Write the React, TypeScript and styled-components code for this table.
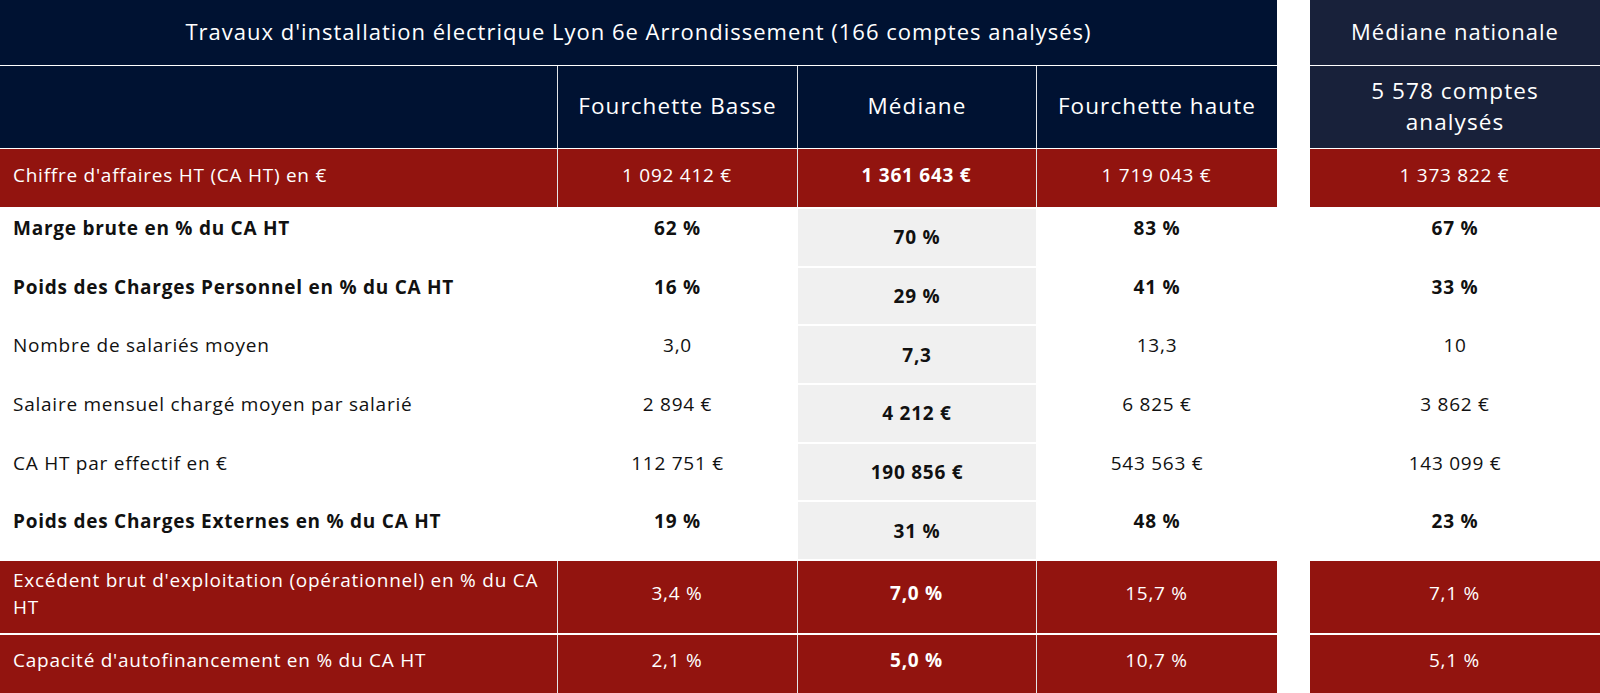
import React from "react";
import styled, { createGlobalStyle } from "styled-components";

const GlobalStyle = createGlobalStyle`
  html, body { margin: 0; padding: 0; background: #ffffff; }
  body { font-family: "Open Sans", "Noto Sans", sans-serif; overflow: hidden; }
`;

const NAVY = "#001232";
const NAVY_NAT = "#18213a";
const RED = "#92140f";
const GRAY = "#f0f0f0";
const LINE = "#e4e5e8";

const Page = styled.div`
  display: flex;
  gap: 33px;
  width: 1600px;
`;

const Table = styled.div<{ $width: string }>`
  display: flex;
  flex-direction: column;
  width: ${(p) => p.$width};
  flex: ${(p) => (p.$width === "auto" ? "1" : "none")};
`;

const Row = styled.div<{ $cols: string; $h: number; $gap: number; $line: boolean }>`
  display: grid;
  grid-template-columns: ${(p) => p.$cols};
  column-gap: 1px;
  height: ${(p) => p.$h}px;
  margin-top: ${(p) => p.$gap}px;
  background: ${(p) => (p.$line ? LINE : "#ffffff")};
`;

const TitleCell = styled.div<{ $bg: string }>`
  background: ${(p) => p.$bg};
  color: #ffffff;
  display: flex;
  align-items: center;
  justify-content: center;
  text-align: center;
  font-size: 22px;
  letter-spacing: 1px;
  padding-bottom: 4px;
  box-sizing: border-box;
`;

const HeadCell = styled.div<{ $bg: string }>`
  background: ${(p) => p.$bg};
  color: #ffffff;
  display: flex;
  align-items: center;
  justify-content: center;
  text-align: center;
  font-size: 22.5px;
  letter-spacing: 1.1px;
  line-height: 31px;
  padding-bottom: 3px;
  box-sizing: border-box;
`;

const RedCell = styled.div<{ $label?: boolean; $bold?: boolean }>`
  background: ${RED};
  color: #ffffff;
  display: flex;
  align-items: center;
  justify-content: ${(p) => (p.$label ? "flex-start" : "center")};
  text-align: ${(p) => (p.$label ? "left" : "center")};
  padding: 0 14px 6px 13px;
  box-sizing: border-box;
  font-size: 19px;
  letter-spacing: 0.75px;
  line-height: 27px;
  font-weight: ${(p) => (p.$bold ? 700 : 400)};
`;

const BodyCell = styled.div<{ $label?: boolean; $bold?: boolean; $median?: boolean }>`
  background: ${(p) => (p.$median ? GRAY : "#ffffff")};
  color: #111111;
  display: flex;
  align-items: ${(p) => (p.$median ? "center" : "flex-start")};
  justify-content: ${(p) => (p.$label ? "flex-start" : "center")};
  padding: ${(p) => (p.$median ? "0" : "6px 0 0")};
  padding-left: ${(p) => (p.$label ? "13px" : "0")};
  box-sizing: border-box;
  font-size: 19px;
  letter-spacing: 0.75px;
  line-height: 26px;
  font-weight: ${(p) => (p.$bold ? 700 : 400)};
`;

const LEFT_COLS = "557px 239px 238px 240px";
const RIGHT_COLS = "1fr";

const nb = (s: string) => s.replace(/ /g, "\u00A0");

type BodyRow = { label: string; bold: boolean; vals: string[]; nat: string };
type RedRow = { label: string; vals: string[]; nat: string; h: number; gap: number };

const redTop: RedRow[] = [
  {
    label: "Chiffre d'affaires HT (CA HT) en €",
    vals: ["1 092 412 €", "1 361 643 €", "1 719 043 €"],
    nat: "1 373 822 €",
    h: 58,
    gap: 1,
  },
];

const bodyRows: BodyRow[] = [
  { label: "Marge brute en % du CA HT", bold: true, vals: ["62 %", "70 %", "83 %"], nat: "67 %" },
  { label: "Poids des Charges Personnel en % du CA HT", bold: true, vals: ["16 %", "29 %", "41 %"], nat: "33 %" },
  { label: "Nombre de salariés moyen", bold: false, vals: ["3,0", "7,3", "13,3"], nat: "10" },
  { label: "Salaire mensuel chargé moyen par salarié", bold: false, vals: ["2 894 €", "4 212 €", "6 825 €"], nat: "3 862 €" },
  { label: "CA HT par effectif en €", bold: false, vals: ["112 751 €", "190 856 €", "543 563 €"], nat: "143 099 €" },
  { label: "Poids des Charges Externes en % du CA HT", bold: true, vals: ["19 %", "31 %", "48 %"], nat: "23 %" },
];

const redBottom: RedRow[] = [
  {
    label: "Excédent brut d'exploitation (opérationnel) en % du CA HT",
    vals: ["3,4 %", "7,0 %", "15,7 %"],
    nat: "7,1 %",
    h: 72,
    gap: 2,
  },
  {
    label: "Capacité d'autofinancement en % du CA HT",
    vals: ["2,1 %", "5,0 %", "10,7 %"],
    nat: "5,1 %",
    h: 58,
    gap: 2,
  },
];

const BODY_H = 56.67;

export default function App() {
  return (
    <>
      <GlobalStyle />
      <Page>
        <Table $width="1277px">
          <Row $cols="1fr" $h={65} $gap={0} $line>
            <TitleCell $bg={NAVY}>
              Travaux d'installation électrique Lyon 6e Arrondissement (166 comptes analysés)
            </TitleCell>
          </Row>
          <Row $cols={LEFT_COLS} $h={82} $gap={1} $line>
            <HeadCell $bg={NAVY} />
            <HeadCell $bg={NAVY}>Fourchette Basse</HeadCell>
            <HeadCell $bg={NAVY}>Médiane</HeadCell>
            <HeadCell $bg={NAVY}>Fourchette haute</HeadCell>
          </Row>
          {redTop.map((r) => (
            <Row key={r.label} $cols={LEFT_COLS} $h={r.h} $gap={r.gap} $line>
              <RedCell $label>{r.label}</RedCell>
              {r.vals.map((v, i) => (
                <RedCell key={i} $bold={i === 1}>{nb(v)}</RedCell>
              ))}
            </Row>
          ))}
          {bodyRows.map((r) => (
            <Row key={r.label} $cols={LEFT_COLS} $h={BODY_H} $gap={2} $line={false}>
              <BodyCell $label $bold={r.bold}>{r.label}</BodyCell>
              {r.vals.map((v, i) => (
                <BodyCell key={i} $median={i === 1} $bold={r.bold || i === 1}>
                  {nb(v)}
                </BodyCell>
              ))}
            </Row>
          ))}
          {redBottom.map((r) => (
            <Row key={r.label} $cols={LEFT_COLS} $h={r.h} $gap={r.gap} $line>
              <RedCell $label>{r.label}</RedCell>
              {r.vals.map((v, i) => (
                <RedCell key={i} $bold={i === 1}>{nb(v)}</RedCell>
              ))}
            </Row>
          ))}
        </Table>
        <Table $width="auto">
          <Row $cols={RIGHT_COLS} $h={65} $gap={0} $line>
            <TitleCell $bg={NAVY_NAT}>Médiane nationale</TitleCell>
          </Row>
          <Row $cols={RIGHT_COLS} $h={82} $gap={1} $line>
            <HeadCell $bg={NAVY_NAT}>
              5 578 comptes
              <br />
              analysés
            </HeadCell>
          </Row>
          {redTop.map((r) => (
            <Row key={r.label} $cols={RIGHT_COLS} $h={r.h} $gap={r.gap} $line>
              <RedCell>{nb(r.nat)}</RedCell>
            </Row>
          ))}
          {bodyRows.map((r) => (
            <Row key={r.label} $cols={RIGHT_COLS} $h={BODY_H} $gap={2} $line={false}>
              <BodyCell $bold={r.bold}>{nb(r.nat)}</BodyCell>
            </Row>
          ))}
          {redBottom.map((r) => (
            <Row key={r.label} $cols={RIGHT_COLS} $h={r.h} $gap={r.gap} $line>
              <RedCell>{nb(r.nat)}</RedCell>
            </Row>
          ))}
        </Table>
      </Page>
    </>
  );
}
